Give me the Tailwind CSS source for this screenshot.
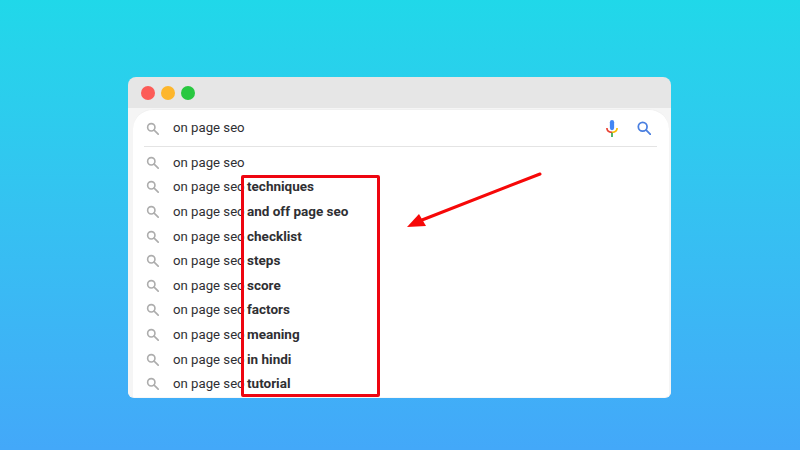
<!DOCTYPE html>
<html lang="en">
  <head>
    <meta charset="UTF-8" />
    <meta name="viewport" content="width=device-width, initial-scale=1.0" />
    <title>On page seo suggestions</title>
    <script src="https://cdn.jsdelivr.net/npm/@tailwindcss/browser@4"></script>
  </head>
  <body class="relative w-[800px] h-[450px] overflow-hidden bg-linear-to-b from-[#20d8e9] to-[#43a8f9] font-['Roboto',sans-serif]">
    <div class="pt-[77px] pl-[128px]">
      <div class="w-[543px] h-[321px] rounded-t-[8px] rounded-b-[6px] overflow-hidden bg-[#e6e6e6] flex flex-col border-b border-white/70">
        <div class="h-[31px] shrink-0 flex items-center gap-[6px] pl-[13px] pt-[1px]">
          <span class="w-[14px] h-[14px] rounded-full bg-[#fc5b57]"></span>
          <span class="w-[14px] h-[14px] rounded-full bg-[#fdb62c]"></span>
          <span class="w-[14px] h-[14px] rounded-full bg-[#29c840]"></span>
        </div>
        <div class="flex-1 bg-[#f5f5f5] pt-[1px]">
          <div class="ml-[5px] mr-[2px] h-full bg-white rounded-t-[20px] pl-[11px] pr-[12px] border-t border-[#f0f0f0] overflow-hidden">
            <div class="h-[37px] flex items-center border-b border-[#e4e4e4]">
              <svg class="w-[13px] h-[13px] ml-[2px] mr-[14px] shrink-0" viewBox="0 0 16 16" fill="none" stroke="#adadad" stroke-width="2"><circle cx="6.5" cy="6.5" r="4.5"/><path d="M10 10l5 5" stroke-linecap="round"/></svg>
              <span class="text-[13.2px] text-[#2f2f33]">on page seo</span>
              <svg class="w-[12px] h-[17px] ml-auto mr-[19px]" viewBox="0 0 14 20" fill="none">
                <rect x="4.5" y="0" width="5" height="12" rx="2.5" fill="#4285f4"/>
                <path d="M1 9.5c0 3.2 2.6 5 6 5" stroke="#ea4335" stroke-width="2"/>
                <path d="M13 9.5c0 3.2-2.6 5-6 5" stroke="#fbbc04" stroke-width="2"/>
                <path d="M7 15v5" stroke="#34a853" stroke-width="2"/>
              </svg>
              <svg class="w-[14px] h-[14px] mr-[6px]" viewBox="0 0 16 16" fill="none" stroke="#4a7fe0" stroke-width="2"><circle cx="6.5" cy="6.5" r="5"/><path d="M10.5 10.5l5 5" stroke-linecap="round"/></svg>
            </div>
            <ul class="pt-[3px] pl-[2px] text-[13.2px] leading-[18px] text-[#2f2f33]">
              <li class="h-[24.6px] flex items-center">
                <svg class="w-[13px] h-[13px] mr-[14px] shrink-0" viewBox="0 0 16 16" fill="none" stroke="#adadad" stroke-width="2"><circle cx="6.5" cy="6.5" r="4.5"/><path d="M10 10l5 5" stroke-linecap="round"/></svg>
                <div class="flex items-baseline mt-[1px]"><span>on page seo</span></div>
              </li>
              <li class="h-[24.6px] flex items-center">
                <svg class="w-[13px] h-[13px] mr-[14px] shrink-0" viewBox="0 0 16 16" fill="none" stroke="#adadad" stroke-width="2"><circle cx="6.5" cy="6.5" r="4.5"/><path d="M10 10l5 5" stroke-linecap="round"/></svg>
                <div class="flex items-baseline"><span class="w-[74px]">on page seo</span><b class="font-bold text-[13.5px]">techniques</b></div>
              </li>
              <li class="h-[24.6px] flex items-center">
                <svg class="w-[13px] h-[13px] mr-[14px] shrink-0" viewBox="0 0 16 16" fill="none" stroke="#adadad" stroke-width="2"><circle cx="6.5" cy="6.5" r="4.5"/><path d="M10 10l5 5" stroke-linecap="round"/></svg>
                <div class="flex items-baseline"><span class="w-[74px]">on page seo</span><b class="font-bold text-[13.5px]">and off page seo</b></div>
              </li>
              <li class="h-[24.6px] flex items-center">
                <svg class="w-[13px] h-[13px] mr-[14px] shrink-0" viewBox="0 0 16 16" fill="none" stroke="#adadad" stroke-width="2"><circle cx="6.5" cy="6.5" r="4.5"/><path d="M10 10l5 5" stroke-linecap="round"/></svg>
                <div class="flex items-baseline"><span class="w-[74px]">on page seo</span><b class="font-bold text-[13.5px]">checklist</b></div>
              </li>
              <li class="h-[24.6px] flex items-center">
                <svg class="w-[13px] h-[13px] mr-[14px] shrink-0" viewBox="0 0 16 16" fill="none" stroke="#adadad" stroke-width="2"><circle cx="6.5" cy="6.5" r="4.5"/><path d="M10 10l5 5" stroke-linecap="round"/></svg>
                <div class="flex items-baseline"><span class="w-[74px]">on page seo</span><b class="font-bold text-[13.5px]">steps</b></div>
              </li>
              <li class="h-[24.6px] flex items-center">
                <svg class="w-[13px] h-[13px] mr-[14px] shrink-0" viewBox="0 0 16 16" fill="none" stroke="#adadad" stroke-width="2"><circle cx="6.5" cy="6.5" r="4.5"/><path d="M10 10l5 5" stroke-linecap="round"/></svg>
                <div class="flex items-baseline"><span class="w-[74px]">on page seo</span><b class="font-bold text-[13.5px]">score</b></div>
              </li>
              <li class="h-[24.6px] flex items-center">
                <svg class="w-[13px] h-[13px] mr-[14px] shrink-0" viewBox="0 0 16 16" fill="none" stroke="#adadad" stroke-width="2"><circle cx="6.5" cy="6.5" r="4.5"/><path d="M10 10l5 5" stroke-linecap="round"/></svg>
                <div class="flex items-baseline"><span class="w-[74px]">on page seo</span><b class="font-bold text-[13.5px]">factors</b></div>
              </li>
              <li class="h-[24.6px] flex items-center">
                <svg class="w-[13px] h-[13px] mr-[14px] shrink-0" viewBox="0 0 16 16" fill="none" stroke="#adadad" stroke-width="2"><circle cx="6.5" cy="6.5" r="4.5"/><path d="M10 10l5 5" stroke-linecap="round"/></svg>
                <div class="flex items-baseline"><span class="w-[74px]">on page seo</span><b class="font-bold text-[13.5px]">meaning</b></div>
              </li>
              <li class="h-[24.6px] flex items-center">
                <svg class="w-[13px] h-[13px] mr-[14px] shrink-0" viewBox="0 0 16 16" fill="none" stroke="#adadad" stroke-width="2"><circle cx="6.5" cy="6.5" r="4.5"/><path d="M10 10l5 5" stroke-linecap="round"/></svg>
                <div class="flex items-baseline"><span class="w-[74px]">on page seo</span><b class="font-bold text-[13.5px]">in hindi</b></div>
              </li>
              <li class="h-[24.6px] flex items-center">
                <svg class="w-[13px] h-[13px] mr-[14px] shrink-0" viewBox="0 0 16 16" fill="none" stroke="#adadad" stroke-width="2"><circle cx="6.5" cy="6.5" r="4.5"/><path d="M10 10l5 5" stroke-linecap="round"/></svg>
                <div class="flex items-baseline"><span class="w-[74px]">on page seo</span><b class="font-bold text-[13.5px]">tutorial</b></div>
              </li>
            </ul>
          </div>
        </div>
      </div>
    </div>

    <!-- red annotation box and arrow sit on top of the list -->
    <div class="absolute left-[241px] top-[175px] w-[139px] h-[222px] border-[3px] border-[#ee0510] rounded-[2px]"></div>
    <svg class="absolute left-[400px] top-[165px] w-[150px] h-[70px]" viewBox="0 0 150 70">
      <path d="M140 9L22 55" stroke="#f60808" stroke-width="3" stroke-linecap="round"/>
      <path d="M7 62L19 49L26 61Z" fill="#f60808"/>
    </svg>
  </body>
</html>
